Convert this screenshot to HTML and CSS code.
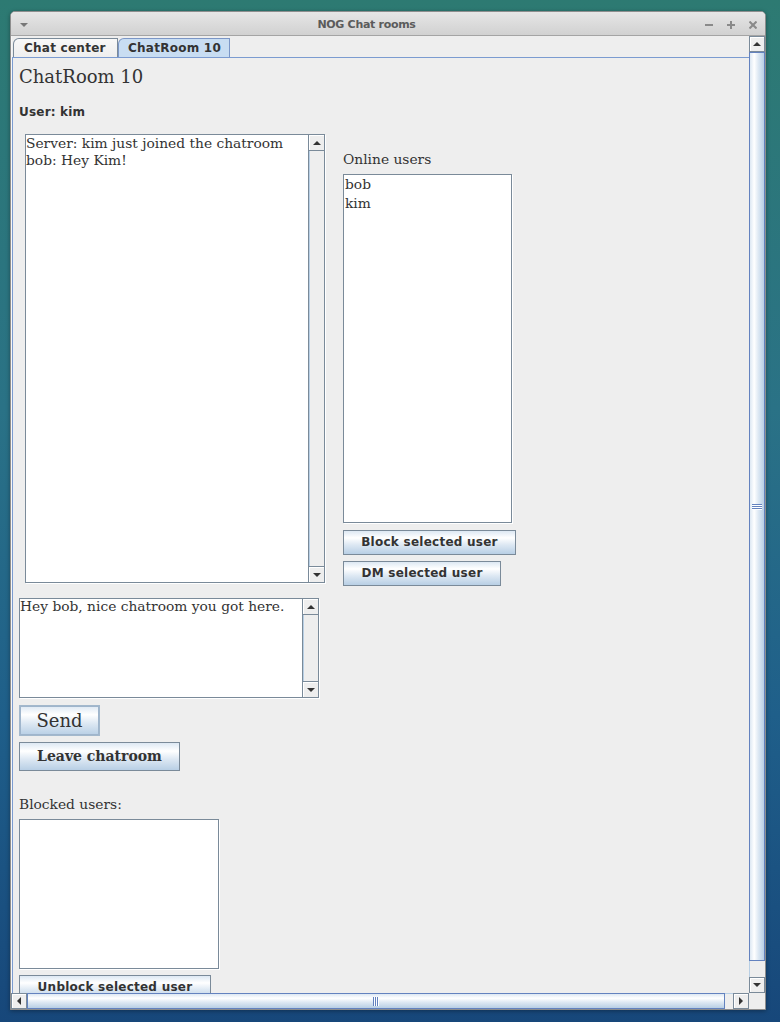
FILE: index.html
```html
<!DOCTYPE html>
<html>
<head>
<meta charset="utf-8">
<title>NOG Chat rooms</title>
<link rel="stylesheet" href="styles.css">
</head>
<body>
<div class="desktop">
  <div class="window">
    <div class="titlebar">
      <span class="menu-btn"><svg width="8" height="4" viewBox="0 0 8 4"><polygon points="0,0 8,0 4,4" fill="#777"/></svg></span>
      <span class="title">NOG Chat rooms</span>
      <span class="controls">
        <svg width="8" height="8" viewBox="0 0 8 8"><line x1="0" y1="4" x2="8" y2="4" stroke="#8a8a8a" stroke-width="2"/></svg>
        <svg width="8" height="8" viewBox="0 0 8 8"><line x1="0" y1="4" x2="8" y2="4" stroke="#8a8a8a" stroke-width="2"/><line x1="4" y1="0" x2="4" y2="8" stroke="#8a8a8a" stroke-width="2"/></svg>
        <svg width="8" height="8" viewBox="0 0 8 8"><line x1="0.5" y1="0.5" x2="7.5" y2="7.5" stroke="#8a8a8a" stroke-width="2"/><line x1="7.5" y1="0.5" x2="0.5" y2="7.5" stroke="#8a8a8a" stroke-width="2"/></svg>
      </span>
    </div>
    <div class="frame-body">
      <div class="viewport">
        <div class="tabpane">
          <div class="tabs">
            <div class="tab tab-center">Chat center</div>
            <div class="tab tab-sel">ChatRoom 10</div>
          </div>
          <div class="content">
            <h1 class="heading">ChatRoom 10</h1>
            <div class="user">User: kim</div>
            <div class="row">
              <div class="textbox chat">
                <div class="text">Server: kim just joined the chatroom<br>bob: Hey Kim!</div>
                <div class="vbar">
                  <div class="abtn up"><svg width="8" height="4" viewBox="0 0 8 4"><polygon points="4,0 8,4 0,4" fill="#333"/></svg></div>
                  <div class="track"></div>
                  <div class="abtn down"><svg width="8" height="4" viewBox="0 0 8 4"><polygon points="0,0 8,0 4,4" fill="#333"/></svg></div>
                </div>
              </div>
              <div class="side">
                <div class="label">Online users</div>
                <div class="list online">
                  <div class="item">bob</div>
                  <div class="item">kim</div>
                </div>
                <button class="btn sans block">Block selected user</button>
                <button class="btn sans dm">DM selected user</button>
              </div>
            </div>
            <div class="textbox msg">
              <div class="text">Hey bob, nice chatroom you got here.</div>
              <div class="vbar">
                <div class="abtn up"><svg width="8" height="4" viewBox="0 0 8 4"><polygon points="4,0 8,4 0,4" fill="#333"/></svg></div>
                <div class="track"></div>
                <div class="abtn down"><svg width="8" height="4" viewBox="0 0 8 4"><polygon points="0,0 8,0 4,4" fill="#333"/></svg></div>
              </div>
            </div>
            <button class="btn send">Send</button>
            <button class="btn leave">Leave chatroom</button>
            <div class="label blocked-label">Blocked users:</div>
            <div class="list blocked"></div>
            <button class="btn sans unblock">Unblock selected user</button>
          </div>
        </div>
      </div>
      <div class="vscroll">
        <div class="sbtn"><svg width="8" height="4" viewBox="0 0 8 4"><polygon points="4,0 8,4 0,4" fill="#333"/></svg></div>
        <div class="vthumb"><div class="vgrip"></div></div>
        <div class="vgap"></div>
        <div class="sbtn"><svg width="8" height="4" viewBox="0 0 8 4"><polygon points="0,0 8,0 4,4" fill="#333"/></svg></div>
      </div>
      <div class="hscroll">
        <div class="sbtn"><svg width="4" height="8" viewBox="0 0 4 8"><polygon points="4,0 4,8 0,4" fill="#333"/></svg></div>
        <div class="hthumb"><div class="hgrip"></div></div>
        <div class="hgap"></div>
        <div class="sbtn"><svg width="4" height="8" viewBox="0 0 4 8"><polygon points="0,0 4,4 0,8" fill="#333"/></svg></div>
      </div>
      <div class="corner"></div>
    </div>
  </div>
</div>
</body>
</html>
```

FILE: styles.css
```css
* { box-sizing: border-box; }
html, body { margin: 0; padding: 0; }
body {
  width: 780px;
  height: 1022px;
  overflow: hidden;
  background: linear-gradient(180deg, #2d7a72 0%, #2a7286 40%, #1f5f8a 70%, #17477a 100%);
  font-family: "DejaVu Sans", sans-serif;
}
.desktop { padding: 11px 0 0 10px; }
.window {
  width: 756px;
  height: 999px;
  border: 1px solid #8e8e8e;
  border-radius: 5px 5px 0 0;
  background: #eeeeee;
  overflow: hidden;
  box-shadow: 0 1px 4px rgba(0, 0, 0, 0.35);
}
.titlebar {
  height: 24px;
  border-bottom: 1px solid #a4a4a4;
  background: linear-gradient(#e6e6e6, #d1d1d1);
  display: flex;
  align-items: center;
  padding-top: 1px;
}
.menu-btn {
  width: 24px;
  padding-left: 9px;
  padding-top: 2px;
  display: flex;
  align-items: center;
}
.title {
  flex: 1;
  text-align: center;
  font: bold 11px "DejaVu Sans", sans-serif;
  color: #5b5b5b;
  letter-spacing: -0.3px;
  padding-top: 1px;
}
.controls {
  display: flex;
  gap: 14px;
  padding: 1px 8px 0 7px;
  align-items: center;
}
.frame-body {
  display: grid;
  grid-template-columns: 738px 16px;
  grid-template-rows: 957px 16px;
}
.viewport {
  overflow: hidden;
  background: #eeeeee;
}
.tabpane {
  width: 760px;
  border-left: 1px solid #f7f7f7;
}
.tabs {
  display: flex;
  height: 21px;
  padding: 2px 0 0 1px;
}
.tab {
  height: 19px;
  border: 1px solid #7a8a99;
  border-bottom: none;
  border-radius: 6px 0 0 0;
  font: bold 12px/18px "DejaVu Sans", sans-serif;
  color: #333333;
  letter-spacing: 0.25px;
  background: linear-gradient(#f8f8f8, #eeeeee);
  white-space: nowrap;
}
.tab-center { width: 105px; padding-left: 10px; }
.tab-sel {
  width: 112px;
  padding-left: 9px;
  background: #c8ddf2;
  border-color: #7b96c6;
}
.content {
  border-top: 1px solid #7b9bd0;
  border-left: 1px solid #7b9bd0;
  padding: 8px 0 0 6px;
  height: 936px;
}
.heading {
  margin: 0;
  height: 22px;
  font: normal 18px/22px "DejaVu Serif", serif;
  color: #333333;
}
.user {
  margin-top: 16px;
  height: 16px;
  font: bold 12px/16px "DejaVu Sans", sans-serif;
  color: #333333;
  letter-spacing: 0.2px;
}
.row {
  display: flex;
  align-items: flex-start;
  margin-top: 14px;
  height: 449px;
}
.textbox {
  display: flex;
  background: #ffffff;
  border: 1px solid #7a8a99;
  box-shadow: 1px 1px 0 #ffffff;
}
.textbox .text {
  flex: 1;
  font: 13.8px/17px "DejaVu Serif", serif;
  color: #333333;
  white-space: nowrap;
  overflow: hidden;
}
.chat { margin-left: 6px; width: 300px; height: 449px; }
.msg { margin-top: 15px; width: 300px; height: 100px; }
.msg .text { line-height: 15px; }
.vbar {
  width: 16px;
  display: flex;
  flex-direction: column;
  border-left: 1px solid #7a8a99;
  background: #eeeeee;
}
.abtn {
  height: 16px;
  display: flex;
  align-items: center;
  justify-content: center;
  background: #eeeeee;
  box-shadow: inset 1px 1px 0 #ffffff;
}
.abtn.up { border-bottom: 1px solid #7a8a99; }
.abtn.down { border-top: 1px solid #7a8a99; }
.track {
  flex: 1;
  box-shadow: inset 1px 0 0 #b8cfe5;
}
.side { margin-left: 18px; width: 180px; }
.label {
  height: 17px;
  font: 13.8px/17px "DejaVu Serif", serif;
  color: #333333;
  white-space: nowrap;
}
.side .label { margin-top: 17px; }
.list {
  background: #ffffff;
  border: 1px solid #7a8a99;
  box-shadow: 1px 1px 0 #ffffff;
}
.online {
  margin-top: 6px;
  width: 169px;
  height: 349px;
  padding-left: 1px;
}
.item {
  font: 13.8px/19px "DejaVu Serif", serif;
  color: #333333;
}
.btn {
  display: block;
  margin: 0;
  padding: 0;
  border: 1px solid #7a8a99;
  background: linear-gradient(#dde8f3 0%, #ffffff 30%, #dde8f3 60%, #b8cfe5 100%);
  color: #333333;
  text-align: center;
  white-space: nowrap;
}
.btn.sans {
  height: 25px;
  font: bold 12px/23px "DejaVu Sans", sans-serif;
  letter-spacing: 0.25px;
}
.block { margin-top: 7px; width: 173px; }
.dm { margin-top: 6px; width: 158px; }
.send {
  margin-top: 7px;
  width: 81px;
  height: 31px;
  font: 18px/27px "DejaVu Serif", serif;
  border: 1px solid #a3b8cc;
  box-shadow: inset 0 0 0 1px #9fb5cc;
}
.leave {
  margin-top: 6px;
  width: 161px;
  height: 29px;
  font: bold 14px/27px "DejaVu Serif", serif;
}
.blocked-label { margin-top: 25px; }
.blocked { margin-top: 6px; width: 200px; height: 150px; }
.unblock { margin-top: 6px; width: 192px; }

.vscroll {
  display: flex;
  flex-direction: column;
  background: #eeeeee;
}
.sbtn {
  width: 16px;
  height: 16px;
  display: flex;
  align-items: center;
  justify-content: center;
  background: #eeeeee;
  border: 1px solid #7a8a99;
  box-shadow: inset 1px 1px 0 #ffffff;
}
.vthumb {
  height: 909px;
  border: 1px solid #6382bf;
  background: linear-gradient(90deg, #dde8f3 0%, #ffffff 30%, #dde8f3 60%, #b8cfe5 100%);
  display: flex;
  align-items: center;
  justify-content: center;
}
.vgrip {
  width: 10px;
  height: 6px;
  background: repeating-linear-gradient(180deg, #6382bf 0, #6382bf 1px, #ffffff 1px, #ffffff 2px);
}
.vgap {
  height: 16px;
  border-left: 1px solid #b8cfe5;
}
.hscroll {
  display: flex;
  background: #eeeeee;
}
.hthumb {
  width: 698px;
  height: 16px;
  border: 1px solid #6382bf;
  background: linear-gradient(180deg, #dde8f3 0%, #ffffff 30%, #dde8f3 60%, #b8cfe5 100%);
  display: flex;
  align-items: center;
  justify-content: center;
}
.hgrip {
  width: 6px;
  height: 9px;
  background: repeating-linear-gradient(90deg, #6382bf 0, #6382bf 1px, #ffffff 1px, #ffffff 2px);
}
.hgap {
  width: 8px;
  border-top: 1px solid #b8cfe5;
}
.corner { background: #eeeeee; }
```
